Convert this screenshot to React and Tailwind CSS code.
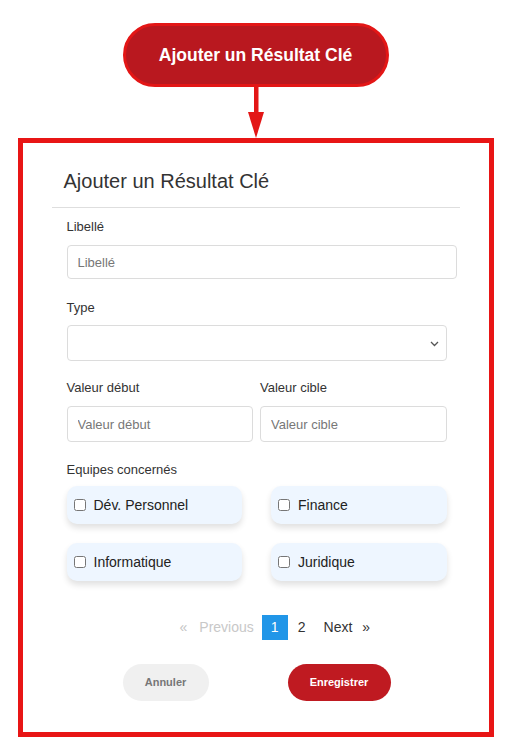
import { useState } from 'react';

const teams = ['Dév. Personnel', 'Finance', 'Informatique', 'Juridique'];

function Field({ label, placeholder, className = '', inputHeight = 'h-[36px]' }) {
    return (
        <div className={`flex flex-col ${className}`}>
            <label className="block text-[13px] leading-[18px] text-[#333]">{label}</label>
            <input
                type="text"
                placeholder={placeholder}
                className={`mt-[9px] ${inputHeight} w-full px-[10px] border border-[#dcdcdc] rounded-[4px] text-[13px] text-[#333] placeholder-[#777] outline-none`}
            />
        </div>
    );
}

export default function App() {
    const [checked, setChecked] = useState({});

    return (
        <div className="w-[511px] h-[754px] bg-white flex flex-col items-center pt-[23px] font-['Liberation_Sans',Arial,sans-serif]">
            {/* Trigger button */}
            <button className="w-[266px] h-[64px] rounded-full border-[3px] border-[#e31616] bg-[#b9181f] text-white font-bold text-[17.5px]">
                Ajouter un Résultat Clé
            </button>

            {/* Arrow */}
            <svg width="20" height="51" viewBox="0 0 20 51">
                <rect x="8" y="0" width="4.5" height="28" fill="#e31616" />
                <polygon points="2,25 18,25 10,51" fill="#e31616" />
            </svg>

            {/* Modal frame */}
            <div className="w-[476px] h-[599px] border-[5px] border-[#e81515] px-[29px]">
                <div className="pt-[24px] pb-[12px] pl-[12px] border-b border-[#dedede]">
                    <h2 className="text-[20px] leading-[28px] text-[#333]">Ajouter un Résultat Clé</h2>
                </div>

                <div className="pl-[15px] pr-[3px] pt-[10px]">
                    <Field label="Libellé" placeholder="Libellé" inputHeight="h-[34px]" />

                    <div className="mt-[20px] flex flex-col pr-[10px]">
                        <label className="block text-[13px] leading-[18px] text-[#333]">Type</label>
                        <div className="relative mt-[8px] h-[36px] border border-[#dcdcdc] rounded-[4px]">
                            <svg width="9" height="6" viewBox="0 0 9 6" className="absolute right-[7px] top-[15px]">
                                <path d="M1 1 L4.5 4.5 L8 1" fill="none" stroke="#555" strokeWidth="1.3" />
                            </svg>
                        </div>
                    </div>

                    <div className="mt-[18px] grid grid-cols-2 gap-[7px] pr-[10px]">
                        <Field label="Valeur début" placeholder="Valeur début" />
                        <Field label="Valeur cible" placeholder="Valeur cible" />
                    </div>

                    <div className="mt-[19px] pr-[10px]">
                        <label className="block text-[13px] leading-[18px] text-[#333]">Equipes concernés</label>
                        <div className="mt-[7px] grid grid-cols-2 gap-x-[29px] gap-y-[19px]">
                            {teams.map(t => (
                                <label
                                    key={t}
                                    className="h-[38px] flex items-center gap-[8px] pl-[7px] rounded-[10px] bg-[#eef6ff] shadow-[0_4px_6px_rgba(0,0,0,0.12)] text-[14px] text-[#222]"
                                >
                                    <input
                                        type="checkbox"
                                        checked={!!checked[t]}
                                        onChange={() => setChecked({ ...checked, [t]: !checked[t] })}
                                        className="w-[12px] h-[12px] m-0"
                                    />
                                    {t}
                                </label>
                            ))}
                        </div>
                    </div>

                    {/* Pagination */}
                    <div className="mt-[34px] flex items-center h-[25px] text-[14px] pl-[113px]">
                        <span className="text-[#c4c4c4]">«</span>
                        <span className="ml-[12px] text-[#c8c8c8]">Previous</span>
                        <span className="ml-[8px] w-[26px] h-[25px] flex items-center justify-center bg-[#2196e8] text-white">1</span>
                        <span className="ml-[10px] text-[#333]">2</span>
                        <span className="ml-[18px] text-[#333]">Next</span>
                        <span className="ml-[10px] text-[#333]">»</span>
                    </div>

                    {/* Actions */}
                    <div className="mt-[24px] flex items-center pl-[56px]">
                        <button className="w-[86px] h-[37px] rounded-full bg-[#f0f0f0] text-[#777] font-bold text-[11px]">
                            Annuler
                        </button>
                        <button className="ml-[79px] w-[103px] h-[37px] rounded-full bg-[#bf1a21] text-white font-bold text-[11px]">
                            Enregistrer
                        </button>
                    </div>
                </div>
            </div>
        </div>
    );
}
